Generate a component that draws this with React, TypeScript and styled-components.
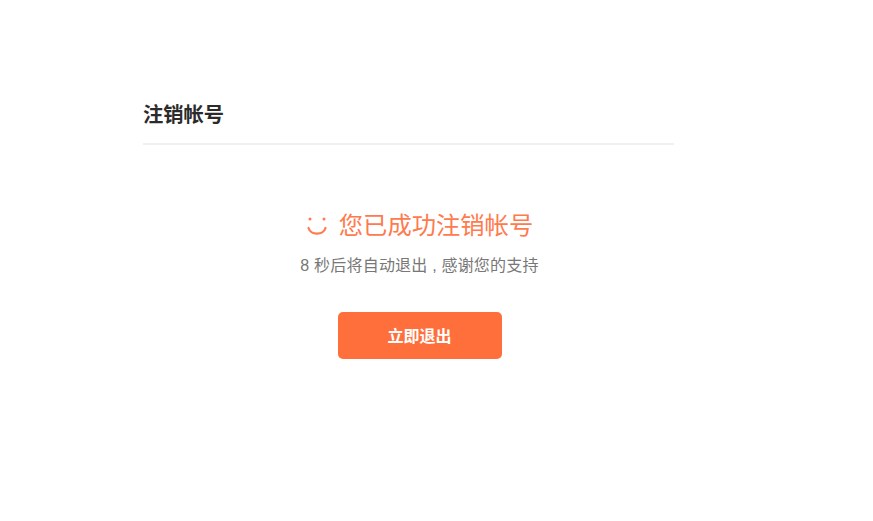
import React from 'react';
import styled, { createGlobalStyle } from "styled-components";

const GlobalStyle = createGlobalStyle`
    html, body {
        margin: 0;
        padding: 0;
        background: #ffffff;
        font-family: "Liberation Sans", "Noto Sans CJK SC", sans-serif;
    }
`

const SmileIcon = () => (
    <Smile viewBox="0 0 22 22" fill="none" stroke="#ff7a4d">
        <circle cx="4" cy="4" r="1.5" fill="#ff7a4d" stroke="none" />
        <circle cx="18" cy="4" r="1.5" fill="#ff7a4d" stroke="none" />
        <path d="M2.5 13c2.5 7.5 14.5 7.5 17 0" strokeWidth="2.2" strokeLinecap="round" />
    </Smile>
)

export default function App() {
    return (
        <Page>
            <GlobalStyle />
            <Header>
                <Title>注销帐号</Title>
            </Header>
            <Content>
                <Result>
                    <SmileIcon />
                    <ResultText>您已成功注销帐号</ResultText>
                </Result>
                <Hint>8 秒后将自动退出 , 感谢您的支持</Hint>
                <ExitButton>立即退出</ExitButton>
            </Content>
        </Page>
    );
}

const Page = styled.div`
    width: 873px;
    height: 521px;
    padding: 101px 0 0 143px;
    box-sizing: border-box;
    background: #ffffff;
    overflow: hidden;
`

const Header = styled.div`
    width: 531px;
    height: 44px;
    box-sizing: border-box;
    padding-top: 1px;
    border-bottom: 2px solid #f0f0f0;
`

const Title = styled.h2`
    margin: 0;
    font-size: 20.3px;
    line-height: 27px;
    font-weight: 700;
    color: #2b2b2b;
`

const Content = styled.div`
    width: 553px;
    display: flex;
    flex-direction: column;
    align-items: center;
    padding-top: 65px;
`

const Result = styled.div`
    display: flex;
    align-items: center;
    gap: 11px;
    height: 32px;
`

const Smile = styled.svg`
    width: 22px;
    height: 22px;
`

const ResultText = styled.span`
    font-size: 24.3px;
    line-height: 32px;
    color: #ff7a4d;
`

const Hint = styled.p`
    margin: 13px 0 0;
    font-size: 16px;
    line-height: 22px;
    letter-spacing: 0.2px;
    color: #777777;
`

const ExitButton = styled.button`
    margin-top: 35px;
    width: 164px;
    height: 47px;
    padding: 0 0 2px;
    border: none;
    border-radius: 5px;
    background: #ff6f3c;
    color: #ffffff;
    font-family: inherit;
    font-size: 16px;
    font-weight: 700;
`
